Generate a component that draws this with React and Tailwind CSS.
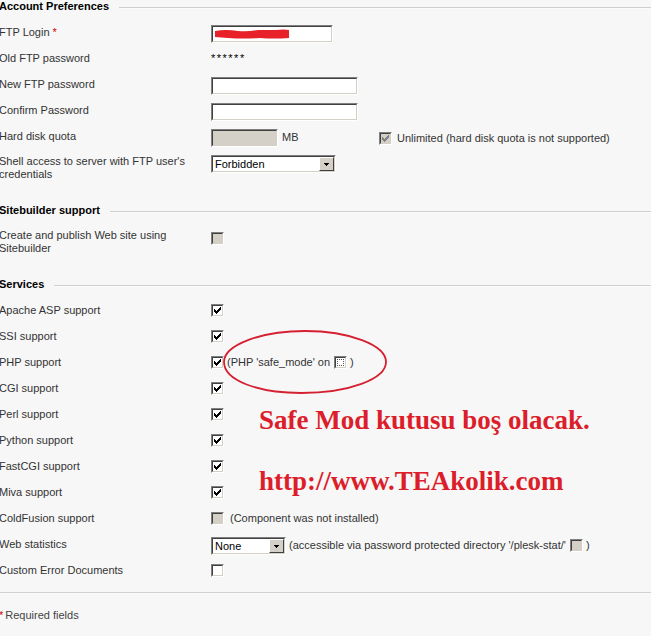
import React from 'react';

const Check = ({ checked, disabled, focus }) => (
  <span className="inline-flex w-[13px] h-[13px] shrink-0 border border-t-[#808080] border-l-[#808080] border-r-white border-b-white">
    <span
      className={`flex-1 flex items-center justify-center border border-t-[#404040] border-l-[#404040] border-r-[#d4d0c8] border-b-[#d4d0c8] ${
        disabled ? 'bg-[#d4d0c8]' : 'bg-white'
      }`}
    >
      {checked && (
        <svg width="7" height="7" viewBox="0 0 7 7" shapeRendering="crispEdges">
          {[2, 3, 4, 3, 2, 1, 0].map((y, x) => (
            <rect key={x} x={x} y={y} width="1" height="3" fill={disabled ? '#808080' : '#000'} />
          ))}
        </svg>
      )}
      {focus && <span className="w-[7px] h-[7px] border border-dotted border-[#555]" />}
    </span>
  </span>
);

const Box = ({ w, grey, children }) => (
  <div className={`${w} h-[18px] mt-[4px] shrink-0 border border-t-[#808080] border-l-[#808080] border-r-white border-b-white`}>
    <div
      className={`h-full flex items-center border border-t-[#404040] border-l-[#404040] border-r-[#d4d0c8] border-b-[#d4d0c8] ${
        grey ? 'bg-[#d4d0c8]' : 'bg-white'
      }`}
    >
      {children}
    </div>
  </div>
);

const Select = ({ w, value }) => (
  <Box w={w}>
    <span className="flex-1 pl-[2px] text-black">{value}</span>
    <span className="w-[15px] h-full flex items-center justify-center bg-[#d4d0c8] border border-t-white border-l-white border-r-[#404040] border-b-[#404040]">
      <svg width="5" height="3" viewBox="0 0 5 3" shapeRendering="crispEdges">
        <path d="M0 0H5V1H4V2H3V3H2V2H1V1H0Z" fill="#000" />
      </svg>
    </span>
  </Box>
);

const Section = ({ title }) => (
  <div className="flex items-center h-[26px]">
    <span className="font-bold text-black">{title}</span>
    <div className="flex-1 ml-[10px] mt-[3px] border-t border-[#cfcfcf] border-b border-b-[#fbfbfb]" />
  </div>
);

const Row = ({ label, children }) => (
  <div className="flex items-center h-[26px]">
    <div className="w-[212px] shrink-0 text-[#333]">{label}</div>
    <div className="flex items-center">{children}</div>
  </div>
);

const services = ['Apache ASP support', 'SSI support'];

const lower = ['CGI support', 'Perl support', 'Python support', 'FastCGI support', 'Miva support'];

export default function App() {
  return (
    <div className="relative w-[651px] h-[636px] overflow-hidden bg-[#f7f7f7] text-[11px] leading-[13px] font-['Liberation_Sans',Arial,sans-serif]">
      <div className="-ml-[1px] -mt-[7px] w-[652px]">
        <Section title="Account Preferences" />
        <Row
          label={
            <>
              FTP Login <span className="text-[#c00]">*</span>
            </>
          }
        >
          <Box w="w-[122px]">
            <svg className="ml-[1px]" width="76" height="11" viewBox="0 0 76 11">
              <path d="M1 2 Q12 0 24 2 Q34 3 44 1 L62 1 Q70 0 75 1 L75 9 Q60 10 46 9 Q30 10 14 9 L1 8 Z" fill="#e8202a" />
            </svg>
          </Box>
        </Row>
        <Row label="Old FTP password">
          <span className="text-black tracking-[1.5px]">******</span>
        </Row>
        <Row label="New FTP password">
          <Box w="w-[147px]" />
        </Row>
        <Row label="Confirm Password">
          <Box w="w-[147px]" />
        </Row>
        <Row label="Hard disk quota">
          <div className="w-[168px] flex items-center">
            <Box w="w-[67px]" grey />
            <span className="ml-[4px] mt-[2px] text-[#333]">MB</span>
          </div>
          <span className="flex mt-[4px]">
            <Check checked disabled />
          </span>
          <span className="ml-[5px] mt-[4px] text-[#333]">Unlimited (hard disk quota is not supported)</span>
        </Row>
        <div className="flex items-start h-[48px]">
          <div className="w-[212px] shrink-0 pt-[6px] text-[#333]">
            Shell access to server with FTP user's
            <br />
            credentials
          </div>
          <div className="mt-[2px]">
            <Select w="w-[125px]" value="Forbidden" />
          </div>
        </div>

        <Section title="Sitebuilder support" />
        <div className="flex items-start h-[48px]">
          <div className="w-[212px] shrink-0 pt-[6px] text-[#333]">
            Create and publish Web site using
            <br />
            Sitebuilder
          </div>
          <div className="mt-[9px] flex">
            <Check disabled />
          </div>
        </div>

        <Section title="Services" />
        {services.map((l) => (
          <Row key={l} label={l}>
            <Check checked />
          </Row>
        ))}
        <Row label="PHP support">
          <Check checked />
          <span className="ml-[3px] text-[#333]">(PHP 'safe_mode' on</span>
          <span className="ml-[4px] flex">
            <Check focus />
          </span>
          <span className="ml-[3px] text-[#333]">)</span>
        </Row>
        {lower.map((l) => (
          <Row key={l} label={l}>
            <Check checked />
          </Row>
        ))}
        <Row label="ColdFusion support">
          <Check disabled />
          <span className="ml-[6px] text-[#333]">(Component was not installed)</span>
        </Row>
        <Row label="Web statistics">
          <Select w="w-[75px]" value="None" />
          <span className="ml-[3px] mt-[2px] text-[#333]">(accessible via password protected directory '/plesk-stat/'</span>
          <span className="ml-[4px] mt-[2px] flex">
            <Check disabled />
          </span>
          <span className="ml-[3px] mt-[2px] text-[#333]">)</span>
        </Row>
        <Row label="Custom Error Documents">
          <Check />
        </Row>

        <div className="mt-[9px] border-t border-[#cfcfcf] border-b border-b-[#fbfbfb]" />
        <div className="mt-[8px] flex items-center h-[26px] text-[#444]">
          <span className="text-[#c00]">*</span>
          <span className="ml-[2px]">Required fields</span>
        </div>
      </div>

      {/* annotations drawn over the screenshot */}
      <svg className="absolute left-[221px] top-[329px]" width="168" height="67" viewBox="0 0 168 67">
        <path
          d="M84 2 C128 2 165 16 165 33 C165 50 128 64 80 64 C36 64 3 51 3 33 C3 16 40 2 84 2 Z"
          fill="none"
          stroke="#d42030"
          strokeWidth="1.8"
        />
      </svg>
      <div className="absolute left-[259px] top-[407px] text-[27px] leading-[27px] font-bold text-[#dc1e2a] font-['Liberation_Serif','Times_New_Roman',serif] whitespace-nowrap">
        Safe Mod kutusu boş olacak.
      </div>
      <div className="absolute left-[259px] top-[468px] text-[27px] leading-[27px] font-bold text-[#dc1e2a] font-['Liberation_Serif','Times_New_Roman',serif] whitespace-nowrap">
        http://www.TEAkolik.com
      </div>
    </div>
  );
}
